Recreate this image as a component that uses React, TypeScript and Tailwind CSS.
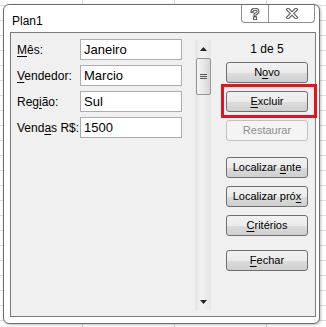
import React from 'react';

const ui = { fontFamily: '"Liberation Sans", Arial, sans-serif' };

function Key({ text, at }: { text: string; at: number }) {
  if (at < 0) return <span>{text}</span>;
  return (
    <span className="whitespace-pre">
      {text.slice(0, at)}
      <span className="underline underline-offset-2">{text[at]}</span>
      {text.slice(at + 1)}
    </span>
  );
}

function Field({ label, at, value }: { label: string; at: number; value: string }) {
  return (
    <div className="flex items-center h-[21px] mb-[5px]">
      <span className="w-[63px] text-[12px] text-black">
        <Key text={label} at={at} />
      </span>
      <div className="w-[102px] h-[21px] bg-white border border-[#abadb3] flex items-center pl-[3px] text-[13px] text-black">
        {value}
      </div>
    </div>
  );
}

function Btn({ label, at, disabled, className }: { label: string; at: number; disabled?: boolean; className?: string }) {
  return (
    <button
      className={
        'w-[82px] h-[21px] rounded-[3px] border text-[11px] leading-none flex items-center justify-center ' +
        (disabled
          ? 'border-[#bfc3c6] bg-[#f4f4f4] text-[#8d8d8d] '
          : 'border-[#707070] bg-[linear-gradient(to_bottom,#f2f2f2_0%,#ebebeb_50%,#dddddd_51%,#cfcfcf_100%)] text-black ') +
        (className ?? '')
      }
    >
      <Key text={label} at={at} />
    </button>
  );
}

export default function App() {
  return (
    <div
      style={ui}
      className="w-[326px] h-[327px] overflow-hidden relative bg-white bg-[linear-gradient(to_right,#dcdcdc_1px,transparent_1px),linear-gradient(to_bottom,#dcdcdc_1px,transparent_1px)] bg-[size:92px_15px] bg-[position:82px_5px]"
    >
      <div className="ml-[3px] mt-[4px] w-[317px] h-[320px] rounded-[6px] border border-[#6e6e6e] bg-white shadow-[1px_1px_3px_rgba(0,0,0,0.25)] flex flex-col">
        {/* title bar */}
        <div className="h-[27px] flex items-start">
          <span className="pl-[8px] pt-[7px] text-[12px] text-black flex-1">Plan1</span>
          <div className="flex mr-[4px]">
            <div className="w-[28px] h-[18px] border border-t-0 border-[#8f8f8f] rounded-bl-[4px] bg-white flex items-center justify-center">
              <svg width="10" height="12" viewBox="0 0 10 12">
                <path d="M2 3.5 Q2 1.2 5 1.2 Q8 1.2 8 3.5 Q8 5 5 6.2 L5 7.6" fill="none" stroke="#5a5a5a" strokeWidth="3" strokeLinecap="square" />
                <path d="M2 3.5 Q2 1.2 5 1.2 Q8 1.2 8 3.5 Q8 5 5 6.2 L5 7.6" fill="none" stroke="#ffffff" strokeWidth="1" />
                <rect x="3.5" y="9" width="3" height="2.6" fill="#ffffff" stroke="#5a5a5a" strokeWidth="1" />
              </svg>
            </div>
            <div className="w-[46px] h-[18px] border border-t-0 border-l-0 border-[#8f8f8f] rounded-br-[4px] bg-white flex items-center justify-center">
              <svg width="12" height="11" viewBox="0 0 12 11">
                <path d="M2 1.5 L10 9.5 M10 1.5 L2 9.5" stroke="#5a5a5a" strokeWidth="3.6" strokeLinecap="square" />
                <path d="M2 1.5 L10 9.5 M10 1.5 L2 9.5" stroke="#ffffff" strokeWidth="1.4" strokeLinecap="square" />
              </svg>
            </div>
          </div>
        </div>

        {/* client area */}
        <div className="ml-[6px] mr-[3px] mb-[6px] flex-1 border border-[#7a7a7a] bg-[#f0f0f0] flex relative">
          <div className="pl-[6px] pt-[6px] w-[171px]">
            <Field label="Mês:" at={0} value="Janeiro" />
            <Field label="Vendedor:" at={0} value="Marcio" />
            <Field label="Região:" at={3} value="Sul" />
            <Field label="Vendas R$:" at={4} value="1500" />
          </div>

          {/* scrollbar */}
          <div className="ml-[13px] mt-[7px] w-[16px] h-[270px] bg-[linear-gradient(to_right,#e3e3e3,#f2f2f2_40%,#e6e6e6)] flex flex-col items-center">
            <div className="h-[17px] flex items-center justify-center">
              <svg width="7" height="4" viewBox="0 0 7 4"><path d="M3.5 0 L7 4 L0 4 Z" fill="#222" /></svg>
            </div>
            <div className="w-[15px] h-[37px] mt-[1px] rounded-[2px] border border-[#959595] bg-[linear-gradient(to_right,#f3f3f3,#e8e8e8_50%,#d6d6d6)] flex flex-col items-center justify-center gap-[1px]">
              <div className="w-[7px] h-[1px] bg-[#555]" />
              <div className="w-[7px] h-[1px] bg-[#555]" />
              <div className="w-[7px] h-[1px] bg-[#555]" />
            </div>
            <div className="flex-1" />
            <div className="h-[17px] flex items-center justify-center">
              <svg width="7" height="4" viewBox="0 0 7 4"><path d="M0 0 L7 0 L3.5 4 Z" fill="#222" /></svg>
            </div>
          </div>

          {/* buttons */}
          <div className="ml-[15px] w-[82px] flex flex-col">
            <div className="h-[29px] pt-[7px] text-center text-[12px] text-black">1 de 5</div>
            <Btn label="Novo" at={1} />
            <Btn label="Excluir" at={0} className="mt-[8px]" />
            <Btn label="Restaurar" at={-1} disabled className="mt-[8px]" />
            <Btn label="Localizar ante" at={10} className="mt-[16px]" />
            <Btn label="Localizar próx" at={13} className="mt-[8px]" />
            <Btn label="Critérios" at={0} className="mt-[8px]" />
            <Btn label="Fechar" at={0} className="mt-[14px]" />
          </div>

          {/* annotation */}
          <div className="absolute left-[210px] top-[51px] w-[96px] h-[34px] border-[3px] border-[#e8121f]" />
        </div>
      </div>
    </div>
  );
}
